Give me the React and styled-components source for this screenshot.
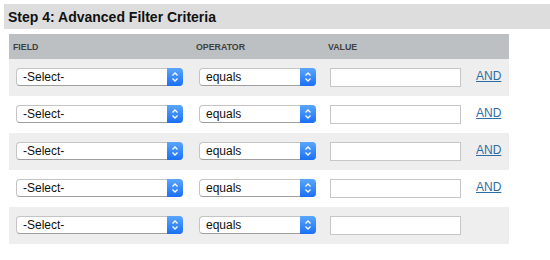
import React from 'react';
import styled, { createGlobalStyle } from 'styled-components';

const GlobalStyle = createGlobalStyle`
  body {
    margin: 0;
    background: #fff;
    font-family: "Liberation Sans", Arial, sans-serif;
  }
`;

const ROWS = [
  { field: '-Select-', op: 'equals', join: 'AND' },
  { field: '-Select-', op: 'equals', join: 'AND' },
  { field: '-Select-', op: 'equals', join: 'AND' },
  { field: '-Select-', op: 'equals', join: 'AND' },
  { field: '-Select-', op: 'equals', join: null },
];

const Chevrons = () => (
  <svg width="8" height="12" viewBox="0 0 8 12" fill="none">
    <path d="M1.5 4.5 L4 2 L6.5 4.5" stroke="#fff" strokeWidth="1.3" />
    <path d="M1.5 7.5 L4 10 L6.5 7.5" stroke="#fff" strokeWidth="1.3" />
  </svg>
);

const FakeSelect = ({ value, width }) => (
  <SelectBox $width={width}>
    <SelectInput defaultValue={value}>
      <option>{value}</option>
    </SelectInput>
    <ArrowButton>
      <Chevrons />
    </ArrowButton>
  </SelectBox>
);

const App = () => {
  return (
    <Page>
      <GlobalStyle />
      <StepHeader>Step 4: Advanced Filter Criteria</StepHeader>
      <Table>
        <HeadRow>
          <HeadCell>FIELD</HeadCell>
          <HeadCell>OPERATOR</HeadCell>
          <HeadCell>VALUE</HeadCell>
          <HeadCell />
        </HeadRow>
        {ROWS.map((row, i) => (
          <Row key={i} $shaded={i % 2 === 0}>
            <Cell>
              <FakeSelect value={row.field} width={167} />
            </Cell>
            <Cell>
              <FakeSelect value={row.op} width={117} />
            </Cell>
            <Cell $pad={6}>
              <ValueInput type="text" />
            </Cell>
            <Cell $pad={6}>
              {row.join && <JoinLink href="#">{row.join}</JoinLink>}
            </Cell>
          </Row>
        ))}
      </Table>
    </Page>
  );
};

const Page = styled.div`
  padding: 4px 0 0 4px;
`;

const StepHeader = styled.h2`
  margin: 0;
  height: 25px;
  display: flex;
  align-items: center;
  padding-left: 4px;
  background: #dddddd;
  color: #111;
  font-size: 14px;
  font-weight: bold;
`;

const Table = styled.div`
  width: 500px;
  margin: 5px 0 0 5px;
`;

const HeadRow = styled.div`
  display: grid;
  grid-template-columns: 183px 132px 146px 1fr;
  height: 25px;
  align-items: center;
  background: #bcc0c3;
`;

const HeadCell = styled.div`
  padding-left: 4px;
  font-size: 8.8px;
  font-weight: bold;
  color: #404040;
`;

const Row = styled.div`
  display: grid;
  grid-template-columns: 183px 132px 146px 1fr;
  height: 37px;
  align-items: center;
  background: ${props => (props.$shaded ? '#eeeeee' : '#ffffff')};
`;

const Cell = styled.div`
  padding-left: ${props => props.$pad || 7}px;
  display: flex;
  align-items: center;
  margin-top: -1px;
`;

const SelectBox = styled.div`
  display: flex;
  width: ${props => props.$width}px;
  height: 18px;
  box-sizing: border-box;
  border: 1px solid #c4c4c4;
  border-right: none;
  border-bottom-color: #9e9e9e;
  border-radius: 4px;
  background: #fff;
`;

const SelectInput = styled.select`
  appearance: none;
  flex: 1;
  min-width: 0;
  border: none;
  outline: none;
  background: transparent;
  padding: 0 0 0 6px;
  margin: 0;
  font-family: "Liberation Sans", Arial, sans-serif;
  font-size: 12px;
  color: #111;
`;

const ArrowButton = styled.span`
  width: 16px;
  flex: none;
  margin: -1px 0;
  border-radius: 0 4px 4px 0;
  display: flex;
  align-items: center;
  justify-content: center;
  background: linear-gradient(#5aa6ff, #1a70f5);
`;

const ValueInput = styled.input`
  width: 131px;
  height: 19px;
  box-sizing: border-box;
  margin: 0;
  border: 1px solid #c6c6c6;
  background: #fff;
  outline: none;
`;

const JoinLink = styled.a`
  font-size: 12px;
  color: #2e6ea6;
  text-decoration: underline;
  margin-top: -2px;
`;

export default App;
